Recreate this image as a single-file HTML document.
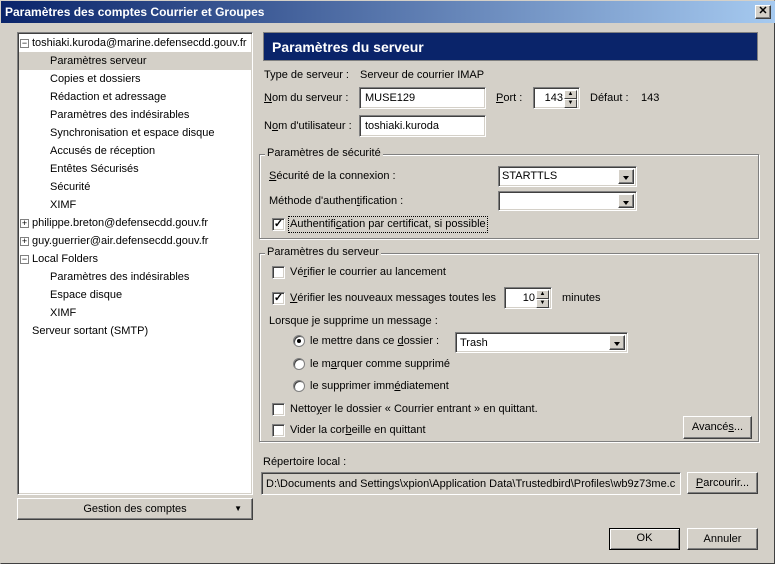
<!DOCTYPE html><html><head><meta charset="utf-8"><style>
*{box-sizing:border-box;margin:0;padding:0}
body{width:775px;height:564px;background:#d4d0c8;font:11px "Liberation Sans",sans-serif;color:#000;position:relative;overflow:hidden;border:1px solid #404040;border-top-color:#d4d0c8;border-left-color:#d4d0c8}
.a{position:absolute;white-space:nowrap}
.t{position:absolute;white-space:nowrap;line-height:13px}
.sunk{position:absolute;background:#fff;border:1px solid;border-color:#808080 #fff #fff #808080;box-shadow:inset 1px 1px 0 #404040,inset -1px -1px 0 #d4d0c8}
.btn{position:absolute;background:#d4d0c8;border:1px solid;border-color:#fff #404040 #404040 #fff;box-shadow:inset -1px -1px 0 #808080;text-align:center}
.grp{position:absolute;border:1px solid #808080;box-shadow:1px 1px 0 #fff,inset 1px 1px 0 #fff}
.leg{position:absolute;background:#d4d0c8;padding:0 2px;line-height:13px}
.cb{position:absolute;width:13px;height:13px;background:#fff;border:1px solid;border-color:#808080 #fff #fff #808080;box-shadow:inset 1px 1px 0 #404040,inset -1px -1px 0 #d4d0c8;font-size:11px;line-height:10px;text-align:center;font-weight:bold}
.rd{position:absolute;width:12px;height:12px;border-radius:50%;background:#fff;border:1px solid #808080;box-shadow:inset 1px 1px 0 #404040}
.dd{position:absolute;right:2px;top:2px;bottom:2px;width:16px;background:#d4d0c8;border:1px solid;border-color:#fff #404040 #404040 #fff;box-shadow:inset -1px -1px 0 #808080}
.dd:after{content:"";position:absolute;left:4px;top:6px;border:3.5px solid transparent;border-top:4px solid #000;border-bottom:0}
.sp{position:absolute;right:2px;width:13px;height:9px;background:#d4d0c8;border:1px solid;border-color:#fff #404040 #404040 #fff}
u{text-decoration:underline}
</style></head><body>
<div class="a" style="left:0;top:0;width:775px;height:22px;background:linear-gradient(90deg,#0a246a,#a6caf0)"></div>
<div class="t" style="left:4px;top:5px;color:#fff;font-weight:bold;font-size:12px">Paramètres des comptes Courrier et Groupes</div>
<div class="btn" style="left:754px;top:4px;width:16px;height:14px;font-size:11px;line-height:11px;font-weight:bold">✕</div>

<div class="sunk" style="left:16px;top:31px;width:236px;height:463px"></div>
<div class="a" style="left:18px;top:51px;width:232px;height:18px;background:#d4d0c8"></div>
<div class="a" style="left:19px;top:38px;width:9px;height:9px;border:1px solid #808080;background:#fff;font-size:9px;line-height:6px;text-align:center">−</div>
<div class="t" style="left:31px;top:36px">toshiaki.kuroda@marine.defensecdd.gouv.fr</div>
<div class="t" style="left:49px;top:54px">Paramètres serveur</div>
<div class="t" style="left:49px;top:72px">Copies et dossiers</div>
<div class="t" style="left:49px;top:90px">Rédaction et adressage</div>
<div class="t" style="left:49px;top:108px">Paramètres des indésirables</div>
<div class="t" style="left:49px;top:126px">Synchronisation et espace disque</div>
<div class="t" style="left:49px;top:144px">Accusés de réception</div>
<div class="t" style="left:49px;top:162px">Entêtes Sécurisés</div>
<div class="t" style="left:49px;top:180px">Sécurité</div>
<div class="t" style="left:49px;top:198px">XIMF</div>
<div class="a" style="left:19px;top:218px;width:9px;height:9px;border:1px solid #808080;background:#fff;font-size:9px;line-height:7px;text-align:center">+</div>
<div class="t" style="left:31px;top:216px">philippe.breton@defensecdd.gouv.fr</div>
<div class="a" style="left:19px;top:236px;width:9px;height:9px;border:1px solid #808080;background:#fff;font-size:9px;line-height:7px;text-align:center">+</div>
<div class="t" style="left:31px;top:234px">guy.guerrier@air.defensecdd.gouv.fr</div>
<div class="a" style="left:19px;top:254px;width:9px;height:9px;border:1px solid #808080;background:#fff;font-size:9px;line-height:6px;text-align:center">−</div>
<div class="t" style="left:31px;top:252px">Local Folders</div>
<div class="t" style="left:49px;top:270px">Paramètres des indésirables</div>
<div class="t" style="left:49px;top:288px">Espace disque</div>
<div class="t" style="left:49px;top:306px">XIMF</div>
<div class="t" style="left:31px;top:324px">Serveur sortant (SMTP)</div>
<div class="btn" style="left:16px;top:497px;width:236px;height:22px;line-height:20px">Gestion des comptes<span style="position:absolute;right:10px;font-size:8px">▼</span></div>

<div class="a" style="left:262px;top:31px;width:495px;height:29px;background:#0a246a;border:1px solid #808080"></div>
<div class="t" style="left:271px;top:38px;color:#fff;font-weight:bold;font-size:14px;line-height:16px">Paramètres du serveur</div>

<div class="t" style="left:263px;top:68px">Type de serveur :</div>
<div class="t" style="left:359px;top:68px">Serveur de courrier IMAP</div>
<div class="t" style="left:263px;top:91px"><u>N</u>om du serveur :</div>
<div class="sunk" style="left:358px;top:86px;width:127px;height:22px"><span class="t" style="left:5px;top:4px">MUSE129</span></div>
<div class="t" style="left:495px;top:91px"><u>P</u>ort :</div>
<div class="sunk" style="left:532px;top:86px;width:47px;height:22px"><span class="t" style="right:16px;top:4px">143</span><div class="sp" style="top:2px;font-size:6px;line-height:6px;text-align:center">▲</div><div class="sp" style="top:11px;font-size:6px;line-height:6px;text-align:center">▼</div></div>
<div class="t" style="left:589px;top:91px">Défaut :</div>
<div class="t" style="left:640px;top:91px">143</div>
<div class="t" style="left:263px;top:119px">N<u>o</u>m d'utilisateur :</div>
<div class="sunk" style="left:358px;top:114px;width:127px;height:22px"><span class="t" style="left:5px;top:4px">toshiaki.kuroda</span></div>

<div class="grp" style="left:258px;top:153px;width:500px;height:85px"></div>
<div class="leg" style="left:264px;top:146px">Paramètres de sécurité</div>
<div class="t" style="left:268px;top:169px"><u>S</u>écurité de la connexion :</div>
<div class="sunk" style="left:497px;top:165px;width:139px;height:21px"><span class="t" style="left:3px;top:3px">STARTTLS</span><div class="dd"></div></div>
<div class="t" style="left:268px;top:194px">Méthode d'authen<u>t</u>ification :</div>
<div class="sunk" style="left:497px;top:190px;width:139px;height:20px"><div class="dd"></div></div>
<div class="cb" style="left:271px;top:217px">✓</div>
<div class="t" style="left:287px;top:215px;border:1px dotted #000;padding:1px">Authentifi<u>c</u>ation par certificat, si possible</div>

<div class="grp" style="left:258px;top:252px;width:500px;height:189px"></div>
<div class="leg" style="left:264px;top:245px">Paramètres du serveur</div>
<div class="cb" style="left:271px;top:265px"></div>
<div class="t" style="left:289px;top:265px">Vé<u>r</u>ifier le courrier au lancement</div>
<div class="cb" style="left:271px;top:291px">✓</div>
<div class="t" style="left:289px;top:291px"><u>V</u>érifier les nouveaux messages toutes les</div>
<div class="sunk" style="left:503px;top:286px;width:48px;height:22px"><span class="t" style="right:16px;top:4px">10</span><div class="sp" style="top:2px;font-size:6px;line-height:6px;text-align:center">▲</div><div class="sp" style="top:11px;font-size:6px;line-height:6px;text-align:center">▼</div></div>
<div class="t" style="left:561px;top:291px">minutes</div>
<div class="t" style="left:268px;top:314px">Lorsque je supprime un message :</div>
<div class="rd" style="left:292px;top:334px"><div style="position:absolute;left:3px;top:3px;width:4px;height:4px;border-radius:50%;background:#000"></div></div>
<div class="t" style="left:309px;top:334px">le mettre dans ce <u>d</u>ossier :</div>
<div class="sunk" style="left:454px;top:331px;width:173px;height:21px"><span class="t" style="left:4px;top:4px">Trash</span><div class="dd"></div></div>
<div class="rd" style="left:292px;top:357px"></div>
<div class="t" style="left:309px;top:357px">le m<u>a</u>rquer comme supprimé</div>
<div class="rd" style="left:292px;top:379px"></div>
<div class="t" style="left:309px;top:379px">le supprimer imm<u>é</u>diatement</div>
<div class="cb" style="left:271px;top:402px"></div>
<div class="t" style="left:289px;top:402px">Netto<u>y</u>er le dossier « Courrier entrant » en quittant.</div>
<div class="cb" style="left:271px;top:423px"></div>
<div class="t" style="left:289px;top:423px">Vider la cor<u>b</u>eille en quittant</div>
<div class="btn" style="left:682px;top:415px;width:69px;height:23px;line-height:21px">Avancé<u>s</u>...</div>

<div class="t" style="left:262px;top:455px">Répertoire local :</div>
<div class="sunk" style="left:260px;top:471px;width:420px;height:23px;background:#d4d0c8"><span class="t" style="left:4px;top:5px">D:\Documents and Settings\xpion\Application Data\Trustedbird\Profiles\wb9z73me.c</span></div>
<div class="btn" style="left:686px;top:471px;width:71px;height:22px;line-height:20px"><u>P</u>arcourir...</div>

<div class="btn" style="left:608px;top:527px;width:71px;height:22px;line-height:19px;border:1px solid #000;box-shadow:inset 1px 1px 0 #fff,inset -1px -1px 0 #808080">OK</div>
<div class="btn" style="left:686px;top:527px;width:71px;height:22px;line-height:20px">Annuler</div>
</body></html>
